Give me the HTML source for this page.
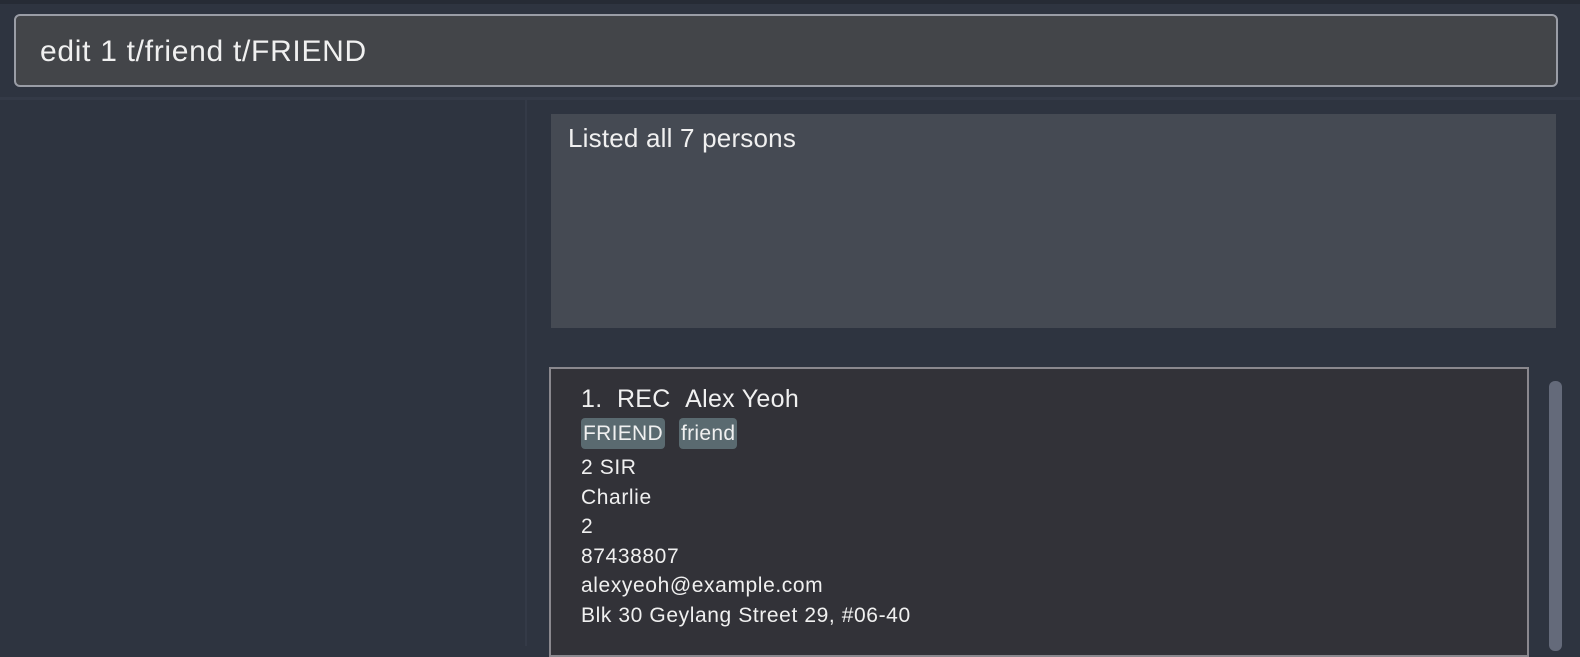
<!DOCTYPE html>
<html><head><style>
body{margin:0;width:1580px;height:646px;background:#2e3440;font-family:"Liberation Sans",sans-serif;color:#f0f0f0;position:relative;overflow:hidden}
div{position:absolute;box-sizing:border-box}
.top{left:0;top:0;width:1580px;height:4px;background:#262b35}
.cmd{left:14px;top:14px;width:1544px;height:73px;background:#434549;border:2px solid #9a9da6;border-radius:6px;font-size:30px;padding:19px 0 0 24px;letter-spacing:0.7px}
.hr{left:0;top:97px;width:1580px;height:3px;background:#343a47}
.vr{left:525px;top:100px;width:2px;height:546px;background:#343a47}
.res{left:551px;top:114px;width:1005px;height:214px;background:#454a53;font-size:26px;padding:9px 0 0 17px;letter-spacing:0.2px}
.card{left:549px;top:367px;width:980px;height:290px;background:#323238;border:2px solid #8a888e;padding:15px 0 0 30px;font-size:21px;line-height:29.5px;letter-spacing:0.6px}
.name{position:static!important;font-size:25px;line-height:30px;height:34px;letter-spacing:0.3px}
.tags{position:static!important;height:35px;letter-spacing:0.3px}
.tag{display:inline-block;background:#5a6a70;border-radius:4px;padding:0 2px;line-height:31px;margin-right:14px}
.sb{left:1549px;top:381px;width:13px;height:270px;background:#646a7a;border-radius:6px}
</style></head><body>
<div class="top"></div>
<div class="cmd">edit 1 t/friend t/FRIEND</div>
<div class="hr"></div>
<div class="vr"></div>
<div class="res">Listed all 7 persons</div>
<div class="card">
<div class="name">1.&nbsp;&nbsp;REC&nbsp;&nbsp;Alex Yeoh</div>
<div class="tags"><span class="tag">FRIEND</span><span class="tag">friend</span></div>
2 SIR<br>Charlie<br>2<br>87438807<br>alexyeoh@example.com<br>Blk 30 Geylang Street 29, #06-40
</div>
<div class="sb"></div>
</body></html>
